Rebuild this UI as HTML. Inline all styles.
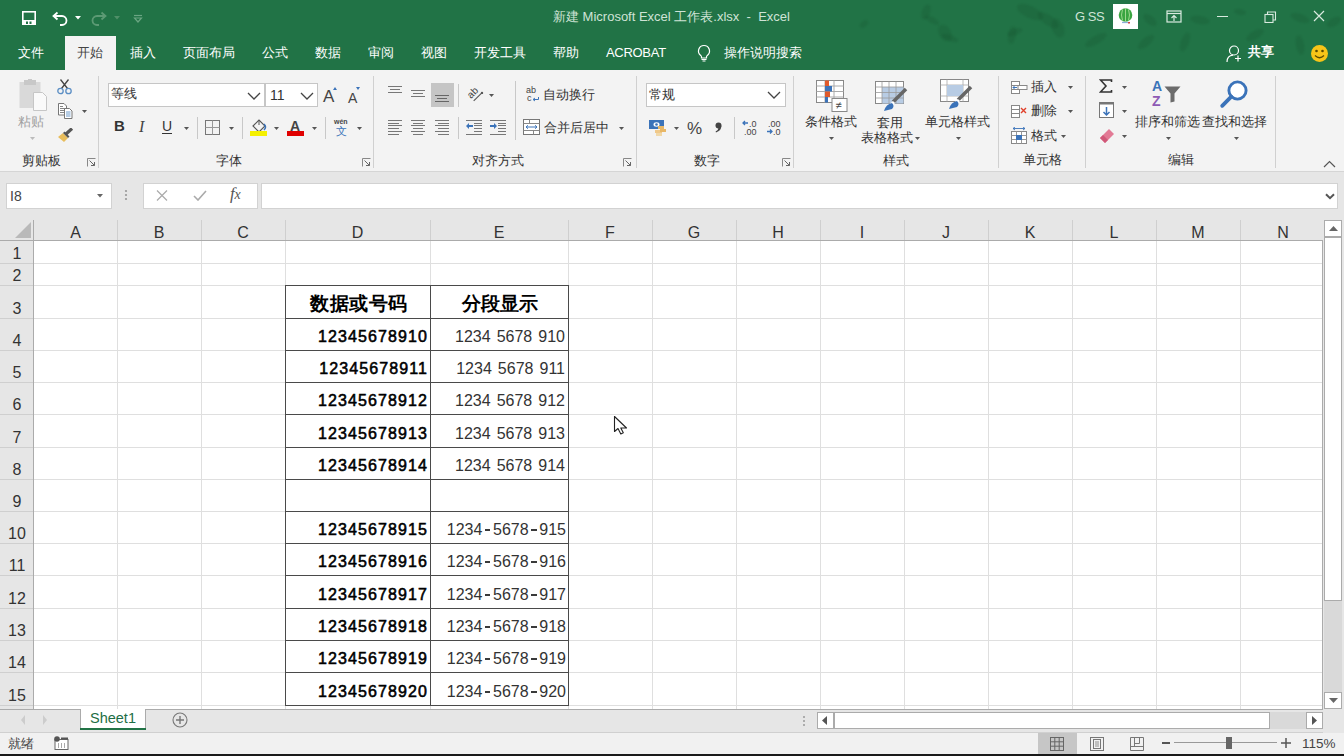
<!DOCTYPE html><html><head><meta charset="utf-8"><style>
*{margin:0;padding:0;box-sizing:border-box}
html,body{width:1344px;height:756px;overflow:hidden;background:#fff;font-family:"Liberation Sans",sans-serif;position:relative}
.a{position:absolute;display:block}
.t{position:absolute;white-space:nowrap;line-height:1}
</style></head><body>
<div class="a" style="left:0px;top:0px;width:1344px;height:70px;background:#217346;"></div>
<svg class="a" style="left:21px;top:10px;" width="16" height="16" viewBox="0 0 16 16"><rect x="1.8" y="1.8" width="12.4" height="12.4" fill="none" stroke="#fff" stroke-width="1.6"/><rect x="1" y="10" width="14" height="5" fill="#fff"/><rect x="5" y="11.5" width="2" height="2.5" fill="#217346"/><rect x="8.5" y="11.5" width="2" height="2.5" fill="#217346"/></svg>
<svg class="a" style="left:51px;top:11px;" width="20" height="16" viewBox="0 0 20 16"><path d="M3 5h8a4.5 4.5 0 0 1 0 9h-2" fill="none" stroke="#fff" stroke-width="1.8"/><path d="M6.5 1.5L2.5 5l4 3.5" fill="none" stroke="#fff" stroke-width="1.8"/></svg>
<svg class="a" style="left:75px;top:16px;" width="6" height="4" viewBox="0 0 6 4"><path d="M0 0h6l-3 3.5z" fill="#fff"/></svg>
<svg class="a" style="left:91px;top:11px;" width="18" height="16" viewBox="0 0 18 16"><path d="M14 5H6a4.5 4.5 0 0 0 0 9h2" fill="none" stroke="#5c9a74" stroke-width="1.8"/><path d="M10.5 1.5L14.5 5l-4 3.5" fill="none" stroke="#5c9a74" stroke-width="1.8"/></svg>
<svg class="a" style="left:114px;top:16px;" width="6" height="4" viewBox="0 0 6 4"><path d="M0 0h6l-3 3.5z" fill="#4f8f68"/></svg>
<svg class="a" style="left:133px;top:14px;" width="10" height="9" viewBox="0 0 10 9"><path d="M1 1.5h8" stroke="#6aa582" stroke-width="1.2"/><path d="M1.5 4h7l-3.5 4z" fill="none" stroke="#6aa582" stroke-width="1.2"/></svg>
<div class="a" style="left:859px;top:21px;width:10px;height:6px;border-radius:50%;background:rgba(10,60,30,0.16);transform:rotate(-40deg);filter:blur(1px)"></div>
<div class="a" style="left:922px;top:4px;width:8px;height:16px;border-radius:50%;background:rgba(10,60,30,0.16);transform:rotate(20deg);filter:blur(1px)"></div>
<div class="a" style="left:924px;top:17px;width:16px;height:6px;border-radius:50%;background:rgba(10,60,30,0.16);transform:rotate(30deg);filter:blur(1px)"></div>
<div class="a" style="left:939px;top:24px;width:12px;height:18px;border-radius:50%;background:rgba(10,60,30,0.16);transform:rotate(-30deg);filter:blur(1px)"></div>
<div class="a" style="left:941px;top:35px;width:18px;height:6px;border-radius:50%;background:rgba(10,60,30,0.16);transform:rotate(20deg);filter:blur(1px)"></div>
<div class="a" style="left:1008px;top:26px;width:8px;height:18px;border-radius:50%;background:rgba(10,60,30,0.16);transform:rotate(10deg);filter:blur(1px)"></div>
<div class="a" style="left:1007px;top:29px;width:16px;height:6px;border-radius:50%;background:rgba(10,60,30,0.16);transform:rotate(-20deg);filter:blur(1px)"></div>
<div class="a" style="left:1016px;top:6px;width:28px;height:12px;border-radius:50%;background:rgba(10,60,30,0.16);transform:rotate(25deg);filter:blur(1px)"></div>
<div class="a" style="left:1036px;top:15px;width:24px;height:10px;border-radius:50%;background:rgba(10,60,30,0.16);transform:rotate(35deg);filter:blur(1px)"></div>
<div class="a" style="left:1052px;top:18px;width:12px;height:20px;border-radius:50%;background:rgba(10,60,30,0.16);transform:rotate(-20deg);filter:blur(1px)"></div>
<div class="a" style="left:1084px;top:36px;width:24px;height:8px;border-radius:50%;background:rgba(10,60,30,0.16);transform:rotate(-30deg);filter:blur(1px)"></div>
<div class="a" style="left:1142px;top:16px;width:16px;height:8px;border-radius:50%;background:rgba(10,60,30,0.16);transform:rotate(40deg);filter:blur(1px)"></div>
<div class="a" style="left:1136px;top:38px;width:20px;height:8px;border-radius:50%;background:rgba(10,60,30,0.16);transform:rotate(-40deg);filter:blur(1px)"></div>
<div class="a" style="left:1181px;top:32px;width:8px;height:20px;border-radius:50%;background:rgba(10,60,30,0.16);transform:rotate(20deg);filter:blur(1px)"></div>
<div class="a" style="left:1190px;top:16px;width:20px;height:8px;border-radius:50%;background:rgba(10,60,30,0.16);transform:rotate(10deg);filter:blur(1px)"></div>
<div class="a" style="left:1245px;top:31px;width:20px;height:8px;border-radius:50%;background:rgba(10,60,30,0.16);transform:rotate(-30deg);filter:blur(1px)"></div>
<div class="a" style="left:1290px;top:14px;width:20px;height:8px;border-radius:50%;background:rgba(10,60,30,0.16);transform:rotate(20deg);filter:blur(1px)"></div>
<div class="a" style="left:1296px;top:35px;width:8px;height:20px;border-radius:50%;background:rgba(10,60,30,0.16);transform:rotate(-10deg);filter:blur(1px)"></div>
<div class="a" style="left:1326px;top:18px;width:16px;height:8px;border-radius:50%;background:rgba(10,60,30,0.16);transform:rotate(-30deg);filter:blur(1px)"></div>
<div class="a" style="left:1234px;top:9px;width:12px;height:6px;border-radius:50%;background:rgba(10,60,30,0.16);transform:rotate(10deg);filter:blur(1px)"></div>
<div class="t" style="left:553px;top:10px;font-size:13px;color:#cfe3d6;font-weight:normal;">新建 Microsoft Excel 工作表.xlsx&nbsp; - &nbsp;Excel</div>
<div class="t" style="left:1075px;top:10px;font-size:13px;color:#cfe3d6;font-weight:normal;letter-spacing:-0.5px">G SS</div>
<div class="a" style="left:1113px;top:4px;width:25px;height:25px;background:#fff;"></div>
<svg class="a" style="left:1117px;top:7px;" width="18" height="19" viewBox="0 0 18 19"><circle cx="8.5" cy="8" r="6.8" fill="#3aa541"/><path d="M5.5 2.5q-2 5.5 0 11M8.5 1.2v13.6M11.5 2.5q2 5.5 0 11" fill="none" stroke="#a8dc98" stroke-width="0.9"/><path d="M5 15.5h8" stroke="#8ab0d8" stroke-width="1.2"/><rect x="11" y="15" width="2" height="1.5" fill="#d04040"/></svg>
<svg class="a" style="left:1166px;top:10px;" width="16" height="13" viewBox="0 0 16 13"><rect x="1" y="1" width="14" height="11" fill="none" stroke="#d9eadf" stroke-width="1.2"/><path d="M1 3.5h14" stroke="#d9eadf" stroke-width="1.2"/><path d="M8 11V6M5.5 8l2.5-2.5L10.5 8" fill="none" stroke="#d9eadf" stroke-width="1.2"/></svg>
<div class="a" style="left:1217px;top:16px;width:11px;height:1px;background:#d9eadf;"></div>
<svg class="a" style="left:1264px;top:11px;" width="13" height="12" viewBox="0 0 13 12"><rect x="1" y="3.5" width="8" height="8" fill="none" stroke="#d9eadf" stroke-width="1.1"/><path d="M3.5 3.5V1h8v8H9" fill="none" stroke="#d9eadf" stroke-width="1.1"/></svg>
<svg class="a" style="left:1313px;top:10px;" width="12" height="12" viewBox="0 0 12 12"><path d="M1 1l10 10M11 1L1 11" stroke="#d9eadf" stroke-width="1.2"/></svg>
<div class="a" style="left:65px;top:36px;width:51px;height:34px;background:#f3f3f3;"></div>
<div class="t" style="left:18px;top:46px;font-size:13px;color:#fff;font-weight:normal;">文件</div>
<div class="t" style="left:77px;top:46px;font-size:13px;color:#444;font-weight:normal;">开始</div>
<div class="t" style="left:130px;top:46px;font-size:13px;color:#fff;font-weight:normal;">插入</div>
<div class="t" style="left:183px;top:46px;font-size:13px;color:#fff;font-weight:normal;">页面布局</div>
<div class="t" style="left:262px;top:46px;font-size:13px;color:#fff;font-weight:normal;">公式</div>
<div class="t" style="left:315px;top:46px;font-size:13px;color:#fff;font-weight:normal;">数据</div>
<div class="t" style="left:368px;top:46px;font-size:13px;color:#fff;font-weight:normal;">审阅</div>
<div class="t" style="left:421px;top:46px;font-size:13px;color:#fff;font-weight:normal;">视图</div>
<div class="t" style="left:474px;top:46px;font-size:13px;color:#fff;font-weight:normal;">开发工具</div>
<div class="t" style="left:553px;top:46px;font-size:13px;color:#fff;font-weight:normal;">帮助</div>
<div class="t" style="left:606px;top:46px;font-size:13px;color:#fff;font-weight:normal;letter-spacing:-0.3px">ACROBAT</div>
<svg class="a" style="left:696px;top:44px;" width="16" height="18" viewBox="0 0 16 18"><path d="M8 1.5a5.5 5.5 0 0 0-3.3 9.9c.5.4.8 1 .8 1.6v1h5v-1c0-.6.3-1.2.8-1.6A5.5 5.5 0 0 0 8 1.5z" fill="none" stroke="#fff" stroke-width="1.2"/><path d="M5.5 15.5h5M6.5 17h3" stroke="#fff" stroke-width="1.2"/></svg>
<div class="t" style="left:724px;top:46px;font-size:13px;color:#fff;font-weight:normal;">操作说明搜索</div>
<svg class="a" style="left:1226px;top:45px;" width="17" height="18" viewBox="0 0 17 18"><circle cx="8" cy="5.5" r="4.5" fill="none" stroke="#fff" stroke-width="1.2"/><path d="M1 17c0-4 2.5-6.5 6-6.8" fill="none" stroke="#fff" stroke-width="1.2"/><path d="M12 10.5v6M9 13.5h6" stroke="#fff" stroke-width="1.2"/></svg>
<div class="t" style="left:1248px;top:45px;font-size:13px;color:#fff;font-weight:bold;">共享</div>
<svg class="a" style="left:1310px;top:44px;" width="19" height="19" viewBox="0 0 19 19"><circle cx="9.5" cy="9.5" r="8.5" fill="#f7c518"/><circle cx="6.5" cy="7" r="1.3" fill="#5a4a00"/><circle cx="12.5" cy="7" r="1.3" fill="#5a4a00"/><path d="M5 11.5q4.5 4.5 9 0" fill="none" stroke="#5a4a00" stroke-width="1.2"/></svg>
<div class="a" style="left:0px;top:70px;width:1344px;height:101px;background:#f3f3f3;"></div>
<div class="a" style="left:0px;top:171px;width:1344px;height:1px;background:#d5d5d5;"></div>
<div class="a" style="left:98px;top:76px;width:1px;height:92px;background:#d0d0d0;"></div>
<div class="a" style="left:373px;top:76px;width:1px;height:92px;background:#d0d0d0;"></div>
<div class="a" style="left:636px;top:76px;width:1px;height:92px;background:#d0d0d0;"></div>
<div class="a" style="left:793px;top:76px;width:1px;height:92px;background:#d0d0d0;"></div>
<div class="a" style="left:998px;top:76px;width:1px;height:92px;background:#d0d0d0;"></div>
<div class="a" style="left:1085px;top:76px;width:1px;height:92px;background:#d0d0d0;"></div>
<div class="a" style="left:1275px;top:76px;width:1px;height:92px;background:#d0d0d0;"></div>
<svg class="a" style="left:18px;top:79px;" width="31" height="33" viewBox="0 0 31 33"><rect x="1.5" y="3" width="21" height="26" fill="#d9d9d9"/><rect x="6" y="1" width="12" height="5" fill="#c8c8c8"/><rect x="10" y="0" width="4" height="3" fill="#c8c8c8"/><path d="M15.5 13.5h9l4 4v14h-13z" fill="#fafafa" stroke="#c6c6c6" stroke-width="1"/></svg>
<div class="t" style="left:18px;top:115px;font-size:13px;color:#a0a0a0;font-weight:normal;">粘贴</div>
<svg class="a" style="left:30px;top:137px;" width="5" height="3" viewBox="0 0 5 3"><path d="M0 0h5l-2.5 3z" fill="#bbb"/></svg>
<svg class="a" style="left:57px;top:79px;" width="15" height="16" viewBox="0 0 15 16"><path d="M3.5 0.5l7 9M11.5 0.5l-7 9" stroke="#444" stroke-width="1.3"/><circle cx="3.5" cy="12" r="2.7" fill="none" stroke="#5b8ec4" stroke-width="1.3"/><circle cx="11.5" cy="12" r="2.7" fill="none" stroke="#5b8ec4" stroke-width="1.3"/></svg>
<svg class="a" style="left:58px;top:103px;" width="15" height="16" viewBox="0 0 15 16"><path d="M0.5 0.5h5.5l2.5 2.5v9h-8z" fill="#fff" stroke="#777" stroke-width="1"/><path d="M2 3.5h3M2 5.5h5M2 7.5h5M2 9.5h5" stroke="#777" stroke-width="0.9"/><path d="M6.5 5.5h5l2.5 2.5v7.5h-7.5z" fill="#fff" stroke="#777" stroke-width="1"/><path d="M8 9h4.5M8 11h4.5M8 13h4.5" stroke="#5b8ec4" stroke-width="0.9"/></svg>
<svg class="a" style="left:82px;top:110px;" width="5" height="3" viewBox="0 0 5 3"><path d="M0 0h5l-2.5 3z" fill="#555"/></svg>
<svg class="a" style="left:57px;top:128px;" width="17" height="15" viewBox="0 0 17 15"><path d="M9 6l6-5.5" stroke="#555" stroke-width="3.2"/><path d="M1 9l5-4 5 5-4 4z" fill="#e8bd5c"/><path d="M6 5l1.5-1.5 5 5L11 10z" fill="#555"/></svg>
<div class="t" style="left:22px;top:154px;font-size:13px;color:#333;font-weight:normal;">剪贴板</div>
<svg class="a" style="left:87px;top:158px;" width="9" height="9" viewBox="0 0 9 9"><path d="M0.5 8.5V0.5h8" fill="none" stroke="#888" stroke-width="1"/><path d="M2.5 2.5l5 5M4 7.5h3.5V4" fill="none" stroke="#666" stroke-width="1"/></svg>
<div class="a" style="left:108px;top:83px;width:157px;height:24px;background:#fff;border:1px solid #c6c6c6"></div>
<div class="t" style="left:111px;top:87px;font-size:13px;color:#333;font-weight:normal;">等线</div>
<svg class="a" style="left:247px;top:92px;" width="14" height="8" viewBox="0 0 14 8"><path d="M1 1l6.0 6l6.0 -6" fill="none" stroke="#444" stroke-width="1.3"/></svg>
<div class="a" style="left:265px;top:83px;width:53px;height:24px;background:#fff;border:1px solid #c6c6c6"></div>
<div class="t" style="left:270px;top:88px;font-size:14px;color:#333;font-weight:normal;">11</div>
<svg class="a" style="left:300px;top:92px;" width="14" height="8" viewBox="0 0 14 8"><path d="M1 1l6.0 6l6.0 -6" fill="none" stroke="#444" stroke-width="1.3"/></svg>
<div class="t" style="left:323px;top:88px;font-size:17px;color:#444;font-weight:normal;font-weight:normal">A</div>
<svg class="a" style="left:333px;top:87px;" width="4" height="3" viewBox="0 0 4 3"><path d="M0 3h4L2 0z" fill="#3b73b9"/></svg>
<div class="t" style="left:348px;top:91px;font-size:14px;color:#444;font-weight:normal;">A</div>
<svg class="a" style="left:356px;top:87px;" width="4" height="3" viewBox="0 0 4 3"><path d="M0 0h4L2 3z" fill="#3b73b9"/></svg>
<div class="t" style="left:114px;top:118px;font-size:15px;color:#333;font-weight:bold;">B</div>
<div class="t" style="left:139px;top:119px;font-size:16px;color:#444;font-weight:normal;font-style:italic;font-family:Liberation Serif,serif">I</div>
<div class="t" style="left:162px;top:119px;font-size:14px;color:#333;font-weight:normal;">U</div>
<div class="a" style="left:162px;top:133px;width:10px;height:1px;background:#333;"></div>
<svg class="a" style="left:184px;top:127px;" width="5" height="3" viewBox="0 0 5 3"><path d="M0 0h5l-2.5 3z" fill="#555"/></svg>
<div class="a" style="left:197px;top:117px;width:1px;height:22px;background:#c8c8c8;"></div>
<svg class="a" style="left:205px;top:120px;" width="15" height="15" viewBox="0 0 15 15"><rect x="0.5" y="0.5" width="14" height="14" fill="none" stroke="#777" stroke-width="1"/><path d="M7.5 0.5v14M0.5 7.5h14" stroke="#999" stroke-width="1"/></svg>
<svg class="a" style="left:229px;top:127px;" width="5" height="3" viewBox="0 0 5 3"><path d="M0 0h5l-2.5 3z" fill="#555"/></svg>
<div class="a" style="left:242px;top:117px;width:1px;height:22px;background:#c8c8c8;"></div>
<svg class="a" style="left:251px;top:119px;" width="16" height="13" viewBox="0 0 16 13"><path d="M2 7l6-6 6 6-6 6z" fill="none" stroke="#555" stroke-width="1.1"/><path d="M8 1v5" stroke="#555" stroke-width="1"/><path d="M13 5q3 3 0 6" fill="none" stroke="#3b73b9" stroke-width="1.5"/></svg>
<div class="a" style="left:250px;top:131px;width:17px;height:5px;background:#f5f000;"></div>
<svg class="a" style="left:274px;top:127px;" width="5" height="3" viewBox="0 0 5 3"><path d="M0 0h5l-2.5 3z" fill="#555"/></svg>
<div class="t" style="left:290px;top:119px;font-size:14px;color:#444;font-weight:bold;">A</div>
<div class="a" style="left:287px;top:131px;width:17px;height:5px;background:#e00000;"></div>
<svg class="a" style="left:312px;top:127px;" width="5" height="3" viewBox="0 0 5 3"><path d="M0 0h5l-2.5 3z" fill="#555"/></svg>
<div class="a" style="left:325px;top:117px;width:1px;height:22px;background:#c8c8c8;"></div>
<div class="t" style="left:334px;top:118px;font-size:7px;color:#444;font-weight:normal;font-weight:bold">wén</div>
<div class="t" style="left:336px;top:126px;font-size:11px;color:#3b73b9;font-weight:normal;">文</div>
<svg class="a" style="left:357px;top:127px;" width="5" height="3" viewBox="0 0 5 3"><path d="M0 0h5l-2.5 3z" fill="#555"/></svg>
<div class="t" style="left:216px;top:154px;font-size:13px;color:#333;font-weight:normal;">字体</div>
<svg class="a" style="left:362px;top:158px;" width="9" height="9" viewBox="0 0 9 9"><path d="M0.5 8.5V0.5h8" fill="none" stroke="#888" stroke-width="1"/><path d="M2.5 2.5l5 5M4 7.5h3.5V4" fill="none" stroke="#666" stroke-width="1"/></svg>
<div class="a" style="left:388px;top:86px;width:14px;height:1px;background:#777;"></div>
<div class="a" style="left:390px;top:89px;width:10px;height:1px;background:#777;"></div>
<div class="a" style="left:388px;top:92px;width:14px;height:1px;background:#777;"></div>
<div class="a" style="left:411px;top:90px;width:14px;height:1px;background:#777;"></div>
<div class="a" style="left:413px;top:93px;width:10px;height:1px;background:#777;"></div>
<div class="a" style="left:411px;top:96px;width:14px;height:1px;background:#777;"></div>
<div class="a" style="left:431px;top:83px;width:23px;height:24px;background:#c5c5c5;"></div>
<div class="a" style="left:435px;top:95px;width:14px;height:1px;background:#666;"></div>
<div class="a" style="left:437px;top:98px;width:10px;height:1px;background:#666;"></div>
<div class="a" style="left:435px;top:101px;width:14px;height:1px;background:#666;"></div>
<div class="a" style="left:458px;top:84px;width:1px;height:23px;background:#c8c8c8;"></div>
<svg class="a" style="left:466px;top:86px;" width="18" height="17" viewBox="0 0 18 17"><text x="5" y="13" font-size="10" font-family="Liberation Sans" fill="#444" transform="rotate(-45 5 13)">ab</text><path d="M7.7 14.8L15.6 7.2" stroke="#555" stroke-width="1.1"/><circle cx="16" cy="6.9" r="1.2" fill="#555"/></svg>
<svg class="a" style="left:489px;top:94px;" width="5" height="3" viewBox="0 0 5 3"><path d="M0 0h5l-2.5 3z" fill="#555"/></svg>
<div class="a" style="left:388px;top:120px;width:14px;height:1px;background:#777;"></div>
<div class="a" style="left:388px;top:123px;width:11px;height:1px;background:#777;"></div>
<div class="a" style="left:388px;top:125px;width:14px;height:1px;background:#777;"></div>
<div class="a" style="left:388px;top:128px;width:11px;height:1px;background:#777;"></div>
<div class="a" style="left:388px;top:131px;width:14px;height:1px;background:#777;"></div>
<div class="a" style="left:388px;top:134px;width:11px;height:1px;background:#777;"></div>
<div class="a" style="left:411px;top:120px;width:14px;height:1px;background:#777;"></div>
<div class="a" style="left:413px;top:123px;width:10px;height:1px;background:#777;"></div>
<div class="a" style="left:411px;top:125px;width:14px;height:1px;background:#777;"></div>
<div class="a" style="left:413px;top:128px;width:10px;height:1px;background:#777;"></div>
<div class="a" style="left:411px;top:131px;width:14px;height:1px;background:#777;"></div>
<div class="a" style="left:413px;top:134px;width:10px;height:1px;background:#777;"></div>
<div class="a" style="left:435px;top:120px;width:14px;height:1px;background:#777;"></div>
<div class="a" style="left:438px;top:123px;width:11px;height:1px;background:#777;"></div>
<div class="a" style="left:435px;top:125px;width:14px;height:1px;background:#777;"></div>
<div class="a" style="left:438px;top:128px;width:11px;height:1px;background:#777;"></div>
<div class="a" style="left:435px;top:131px;width:14px;height:1px;background:#777;"></div>
<div class="a" style="left:438px;top:134px;width:11px;height:1px;background:#777;"></div>
<div class="a" style="left:458px;top:117px;width:1px;height:22px;background:#c8c8c8;"></div>
<div class="a" style="left:466px;top:120px;width:16px;height:1px;background:#777;"></div>
<div class="a" style="left:474px;top:123px;width:8px;height:1px;background:#777;"></div>
<div class="a" style="left:474px;top:125px;width:8px;height:1px;background:#777;"></div>
<div class="a" style="left:474px;top:128px;width:8px;height:1px;background:#777;"></div>
<div class="a" style="left:474px;top:131px;width:8px;height:1px;background:#777;"></div>
<div class="a" style="left:466px;top:134px;width:16px;height:1px;background:#777;"></div>
<svg class="a" style="left:466px;top:123px;" width="7" height="6" viewBox="0 0 7 6"><path d="M0 3l3-3v2h4v2H3v2z" fill="#3b73b9"/></svg>
<div class="a" style="left:490px;top:120px;width:16px;height:1px;background:#777;"></div>
<div class="a" style="left:498px;top:123px;width:8px;height:1px;background:#777;"></div>
<div class="a" style="left:498px;top:125px;width:8px;height:1px;background:#777;"></div>
<div class="a" style="left:498px;top:128px;width:8px;height:1px;background:#777;"></div>
<div class="a" style="left:498px;top:131px;width:8px;height:1px;background:#777;"></div>
<div class="a" style="left:490px;top:134px;width:16px;height:1px;background:#777;"></div>
<svg class="a" style="left:490px;top:123px;" width="7" height="6" viewBox="0 0 7 6"><path d="M7 3L4 0v2H0v2h4v2z" fill="#3b73b9"/></svg>
<div class="a" style="left:515px;top:81px;width:1px;height:59px;background:#c8c8c8;"></div>
<div class="t" style="left:526px;top:86px;font-size:9px;color:#444;font-weight:normal;letter-spacing:0px">ab</div>
<div class="t" style="left:527px;top:94px;font-size:9px;color:#444;font-weight:normal;">c</div>
<svg class="a" style="left:532px;top:97px;" width="7" height="5" viewBox="0 0 7 5"><path d="M6.5 0v2.5H1.5M3 1l-2 1.5 2 1.5" fill="none" stroke="#3b73b9" stroke-width="1"/></svg>
<div class="t" style="left:543px;top:88px;font-size:13px;color:#333;font-weight:normal;">自动换行</div>
<svg class="a" style="left:523px;top:119px;" width="17" height="16" viewBox="0 0 17 16"><rect x="0.5" y="0.5" width="16" height="15" fill="#fff" stroke="#777" stroke-width="1"/><path d="M0.5 4.5h16M0.5 11.5h16M6.5 0.5v4M10.5 11.5v4" stroke="#888" stroke-width="1"/><path d="M3 8h11M5 6.3L3 8l2 1.7M12 6.3L14 8l-2 1.7" fill="none" stroke="#3b73b9" stroke-width="1"/></svg>
<div class="t" style="left:544px;top:121px;font-size:13px;color:#333;font-weight:normal;">合并后居中</div>
<svg class="a" style="left:619px;top:127px;" width="5" height="3" viewBox="0 0 5 3"><path d="M0 0h5l-2.5 3z" fill="#555"/></svg>
<div class="t" style="left:472px;top:154px;font-size:13px;color:#333;font-weight:normal;">对齐方式</div>
<svg class="a" style="left:623px;top:158px;" width="9" height="9" viewBox="0 0 9 9"><path d="M0.5 8.5V0.5h8" fill="none" stroke="#888" stroke-width="1"/><path d="M2.5 2.5l5 5M4 7.5h3.5V4" fill="none" stroke="#666" stroke-width="1"/></svg>
<div class="a" style="left:646px;top:83px;width:140px;height:24px;background:#fff;border:1px solid #c6c6c6"></div>
<div class="t" style="left:649px;top:88px;font-size:13px;color:#333;font-weight:normal;">常规</div>
<svg class="a" style="left:767px;top:91px;" width="14" height="8" viewBox="0 0 14 8"><path d="M1 1l6.0 6l6.0 -6" fill="none" stroke="#444" stroke-width="1.3"/></svg>
<svg class="a" style="left:649px;top:120px;" width="17" height="16" viewBox="0 0 17 16"><rect x="0" y="0" width="15" height="9" fill="#3b73b9"/><ellipse cx="7.5" cy="4.5" rx="3" ry="2.2" fill="#fff"/><circle cx="7.5" cy="4.5" r="1.3" fill="#3b73b9"/><rect x="9" y="6" width="6" height="3" fill="#e8b766"/><rect x="6" y="10" width="7" height="3" fill="#f0c98a"/><rect x="11" y="9" width="6" height="3" fill="#e8b766"/><rect x="7" y="13" width="6" height="3" fill="#f0d8aa"/></svg>
<svg class="a" style="left:674px;top:127px;" width="5" height="3" viewBox="0 0 5 3"><path d="M0 0h5l-2.5 3z" fill="#555"/></svg>
<div class="t" style="left:687px;top:120px;font-size:17px;color:#444;font-weight:normal;">%</div>
<svg class="a" style="left:714px;top:122px;" width="8" height="11" viewBox="0 0 8 11"><circle cx="4.5" cy="3.5" r="3" fill="#444"/><path d="M7.3 4Q7.5 8.5 2 10.5L1.6 9.6Q4.5 8 4.6 5.5z" fill="#444"/></svg>
<div class="a" style="left:734px;top:117px;width:1px;height:22px;background:#c8c8c8;"></div>
<svg class="a" style="left:742px;top:120px;" width="17" height="15" viewBox="0 0 17 15"><path d="M6 3H1M3 1L1 3l2 2" fill="none" stroke="#3b73b9" stroke-width="1.3"/><text x="7" y="7" font-size="9" font-family="Liberation Sans" fill="#444">.0</text><text x="2" y="14.5" font-size="9" font-family="Liberation Sans" fill="#444">.00</text></svg>
<svg class="a" style="left:766px;top:120px;" width="17" height="15" viewBox="0 0 17 15"><text x="2" y="7" font-size="9" font-family="Liberation Sans" fill="#444">.00</text><path d="M1 11.5h5M4 9.5l2 2-2 2" fill="none" stroke="#3b73b9" stroke-width="1.3"/><text x="7" y="14.5" font-size="9" font-family="Liberation Sans" fill="#444">.0</text></svg>
<div class="t" style="left:694px;top:154px;font-size:13px;color:#333;font-weight:normal;">数字</div>
<svg class="a" style="left:782px;top:158px;" width="9" height="9" viewBox="0 0 9 9"><path d="M0.5 8.5V0.5h8" fill="none" stroke="#888" stroke-width="1"/><path d="M2.5 2.5l5 5M4 7.5h3.5V4" fill="none" stroke="#666" stroke-width="1"/></svg>
<svg class="a" style="left:815px;top:79px;" width="33" height="33" viewBox="0 0 33 33"><rect x="1.5" y="1.5" width="27" height="22" fill="#fff" stroke="#888" stroke-width="1"/><path d="M1.5 7h27M1.5 12.5h27M1.5 18h27M10 1.5v22M19 1.5v22" stroke="#aaa" stroke-width="1"/><rect x="10" y="1.5" width="4" height="5.5" fill="#e05a2b"/><rect x="10" y="7" width="7" height="5.5" fill="#3b73b9"/><rect x="10" y="12.5" width="5" height="5.5" fill="#e05a2b"/><rect x="10" y="18" width="3" height="5.5" fill="#3b73b9"/><rect x="17" y="19.5" width="15" height="13" fill="#fff" stroke="#888" stroke-width="1"/><text x="20.5" y="30" font-size="11" font-family="Liberation Sans" fill="#444">≠</text></svg>
<div class="t" style="left:805px;top:115px;font-size:13px;color:#333;font-weight:normal;">条件格式</div>
<svg class="a" style="left:829px;top:137px;" width="5" height="3" viewBox="0 0 5 3"><path d="M0 0h5l-2.5 3z" fill="#555"/></svg>
<svg class="a" style="left:875px;top:81px;" width="34" height="31" viewBox="0 0 34 31"><rect x="0.5" y="0.5" width="28" height="22" fill="#fff" stroke="#888" stroke-width="1"/><rect x="7" y="6" width="21.5" height="16.5" fill="#b8cce4"/><path d="M0.5 6h28M0.5 11.5h28M0.5 17h28M7 0.5v22M14 0.5v22M21 0.5v22" stroke="#999" stroke-width="0.8"/><path d="M18 21l13-13" stroke="#666" stroke-width="3.5"/><path d="M19 21l-3 3" stroke="#fff" stroke-width="3"/><path d="M9 30q2-7 8-8 3 3 0 6z" fill="#3b73b9"/></svg>
<div class="t" style="left:877px;top:116px;font-size:13px;color:#333;font-weight:normal;">套用</div>
<div class="t" style="left:861px;top:131px;font-size:13px;color:#333;font-weight:normal;">表格格式</div>
<svg class="a" style="left:915px;top:137px;" width="5" height="3" viewBox="0 0 5 3"><path d="M0 0h5l-2.5 3z" fill="#555"/></svg>
<svg class="a" style="left:940px;top:79px;" width="34" height="31" viewBox="0 0 34 31"><rect x="0.5" y="0.5" width="28" height="22" fill="#fff" stroke="#888" stroke-width="1"/><path d="M0.5 6h28M0.5 17h28M7 0.5v22M23 0.5v22" stroke="#aaa" stroke-width="0.8"/><rect x="7" y="6" width="16" height="11" fill="#b8cce4"/><path d="M18 21l13-13" stroke="#666" stroke-width="3.5"/><path d="M19 21l-3 3" stroke="#fff" stroke-width="3"/><path d="M9 30q2-7 8-8 3 3 0 6z" fill="#3b73b9"/></svg>
<div class="t" style="left:925px;top:115px;font-size:13px;color:#333;font-weight:normal;">单元格样式</div>
<svg class="a" style="left:956px;top:137px;" width="5" height="3" viewBox="0 0 5 3"><path d="M0 0h5l-2.5 3z" fill="#555"/></svg>
<div class="t" style="left:883px;top:154px;font-size:13px;color:#333;font-weight:normal;">样式</div>
<svg class="a" style="left:1011px;top:79px;" width="17" height="16" viewBox="0 0 17 16"><rect x="0.5" y="2.5" width="8" height="12" fill="#fff" stroke="#888" stroke-width="1"/><path d="M0.5 6.5h8M0.5 10.5h8" stroke="#888" stroke-width="1"/><rect x="7" y="6.5" width="9" height="4" fill="#fff" stroke="#888" stroke-width="1"/><path d="M6 8.5H2M3.5 7L2 8.5 3.5 10" fill="none" stroke="#3b73b9" stroke-width="1"/></svg>
<div class="t" style="left:1031px;top:80px;font-size:13px;color:#333;font-weight:normal;">插入</div>
<svg class="a" style="left:1068px;top:86px;" width="5" height="3" viewBox="0 0 5 3"><path d="M0 0h5l-2.5 3z" fill="#555"/></svg>
<svg class="a" style="left:1011px;top:103px;" width="17" height="16" viewBox="0 0 17 16"><rect x="0.5" y="2.5" width="8" height="12" fill="#fff" stroke="#888" stroke-width="1"/><path d="M0.5 6.5h8M0.5 10.5h8" stroke="#888" stroke-width="1"/><path d="M10 5l5 5M15 5l-5 5" stroke="#e0402a" stroke-width="1.4"/></svg>
<div class="t" style="left:1031px;top:104px;font-size:13px;color:#333;font-weight:normal;">删除</div>
<svg class="a" style="left:1068px;top:110px;" width="5" height="3" viewBox="0 0 5 3"><path d="M0 0h5l-2.5 3z" fill="#555"/></svg>
<svg class="a" style="left:1011px;top:127px;" width="17" height="17" viewBox="0 0 17 17"><rect x="0.5" y="4.5" width="15" height="12" fill="#fff" stroke="#888" stroke-width="1"/><path d="M0.5 8.5h15M0.5 12.5h15M5.5 4.5v12M10.5 4.5v12" stroke="#999" stroke-width="1"/><rect x="5" y="8" width="6" height="5" fill="#3b73b9"/><path d="M2 1.5h12M4 0l-2 1.5 2 1.5M12 0l2 1.5-2 1.5" fill="none" stroke="#3b73b9" stroke-width="0.9"/></svg>
<div class="t" style="left:1031px;top:129px;font-size:13px;color:#333;font-weight:normal;">格式</div>
<svg class="a" style="left:1061px;top:135px;" width="5" height="3" viewBox="0 0 5 3"><path d="M0 0h5l-2.5 3z" fill="#555"/></svg>
<div class="t" style="left:1023px;top:153px;font-size:13px;color:#333;font-weight:normal;">单元格</div>
<svg class="a" style="left:1099px;top:79px;" width="14" height="14" viewBox="0 0 14 14"><path d="M12.5 3V1H1.5l5.5 6-5.5 6h11v-2" fill="none" stroke="#333" stroke-width="1.6"/></svg>
<svg class="a" style="left:1122px;top:86px;" width="5" height="3" viewBox="0 0 5 3"><path d="M0 0h5l-2.5 3z" fill="#555"/></svg>
<svg class="a" style="left:1099px;top:102px;" width="16" height="17" viewBox="0 0 16 17"><rect x="0.5" y="0.5" width="14" height="15" fill="#fff" stroke="#777" stroke-width="1"/><rect x="0.5" y="0.5" width="14" height="2" fill="#777"/><path d="M7.5 5v8M4.5 10l3 3 3-3" fill="none" stroke="#3b73b9" stroke-width="1.5"/></svg>
<svg class="a" style="left:1122px;top:110px;" width="5" height="3" viewBox="0 0 5 3"><path d="M0 0h5l-2.5 3z" fill="#555"/></svg>
<svg class="a" style="left:1099px;top:128px;" width="16" height="15" viewBox="0 0 16 15"><path d="M1 10l9-9 5 5-9 9z" fill="#e27a95"/><path d="M1 10l3-3 5 5-3 3z" fill="#d05878"/></svg>
<svg class="a" style="left:1122px;top:135px;" width="5" height="3" viewBox="0 0 5 3"><path d="M0 0h5l-2.5 3z" fill="#555"/></svg>
<div class="t" style="left:1152px;top:79px;font-size:14px;color:#3b73b9;font-weight:bold;">A</div>
<div class="t" style="left:1152px;top:94px;font-size:14px;color:#8e5bb5;font-weight:bold;">Z</div>
<svg class="a" style="left:1164px;top:86px;" width="18" height="17" viewBox="0 0 18 17"><path d="M0.5 0.5h16l-6 7v8l-4 1v-9z" fill="#6b6b6b"/></svg>
<div class="t" style="left:1135px;top:115px;font-size:13px;color:#333;font-weight:normal;">排序和筛选</div>
<svg class="a" style="left:1166px;top:137px;" width="5" height="3" viewBox="0 0 5 3"><path d="M0 0h5l-2.5 3z" fill="#555"/></svg>
<svg class="a" style="left:1219px;top:80px;" width="30" height="30" viewBox="0 0 30 30"><circle cx="18.5" cy="10.5" r="8.6" fill="#fff" stroke="#3b73b9" stroke-width="2.9"/><path d="M12.3 16.7L3.2 25.8" stroke="#3b73b9" stroke-width="3.8" stroke-linecap="round"/></svg>
<div class="t" style="left:1202px;top:115px;font-size:13px;color:#333;font-weight:normal;">查找和选择</div>
<svg class="a" style="left:1234px;top:137px;" width="5" height="3" viewBox="0 0 5 3"><path d="M0 0h5l-2.5 3z" fill="#555"/></svg>
<div class="t" style="left:1168px;top:153px;font-size:13px;color:#333;font-weight:normal;">编辑</div>
<svg class="a" style="left:1323px;top:160px;" width="13" height="8" viewBox="0 0 13 8"><path d="M1 7l5.5-5.5L12 7" fill="none" stroke="#555" stroke-width="1.2"/></svg>
<div class="a" style="left:0px;top:172px;width:1344px;height:44px;background:#e6e6e6;"></div>
<div class="a" style="left:6px;top:183px;width:106px;height:26px;background:#fff;border:1px solid #d2d2d2"></div>
<div class="t" style="left:10px;top:189px;font-size:14px;color:#444;font-weight:normal;">I8</div>
<svg class="a" style="left:97px;top:194px;" width="6" height="4" viewBox="0 0 6 4"><path d="M0 0h6l-3 3.5z" fill="#666"/></svg>
<svg class="a" style="left:124px;top:189px;" width="4" height="12" viewBox="0 0 4 12"><circle cx="2" cy="2" r="1.1" fill="#999"/><circle cx="2" cy="6" r="1.1" fill="#999"/><circle cx="2" cy="10" r="1.1" fill="#999"/></svg>
<div class="a" style="left:143px;top:183px;width:115px;height:26px;background:#fff;border:1px solid #d2d2d2"></div>
<svg class="a" style="left:156px;top:190px;" width="12" height="11" viewBox="0 0 12 11"><path d="M1 0.5l10 10M11 0.5l-10 10" stroke="#aaa" stroke-width="1.2"/></svg>
<svg class="a" style="left:193px;top:190px;" width="14" height="11" viewBox="0 0 14 11"><path d="M1 6l4 4 8-9" fill="none" stroke="#aaa" stroke-width="1.6"/></svg>
<div class="t" style="left:230px;top:185px;font-size:17px;color:#555;font-weight:normal;font-family:Liberation Serif,serif;font-weight:normal;letter-spacing:-0.3px"><i>f</i><i style="font-size:14px">x</i></div>
<div class="a" style="left:261px;top:183px;width:1077px;height:26px;background:#fff;border:1px solid #d2d2d2"></div>
<svg class="a" style="left:1325px;top:193px;" width="10" height="7" viewBox="0 0 10 7"><path d="M1 1.2l4 4 4-4" fill="none" stroke="#555" stroke-width="2"/></svg>
<div class="a" style="left:0px;top:216px;width:1323px;height:25px;background:#e6e6e6;"></div>
<div class="a" style="left:34px;top:241px;width:1289px;height:468px;background:#ffffff;"></div>
<div class="a" style="left:0px;top:241px;width:34px;height:468px;background:#e6e6e6;"></div>
<div class="a" style="left:0px;top:240px;width:1323px;height:1px;background:#ababab;"></div>
<div class="a" style="left:33px;top:220px;width:1px;height:489px;background:#ababab;"></div>
<svg class="a" style="left:15px;top:222px;" width="17" height="17" viewBox="0 0 17 17"><path d="M16 0v16H0z" fill="#b9b9b9"/></svg>
<div class="a" style="left:117px;top:241px;width:1px;height:468px;background:#dfdfdf;"></div>
<div class="a" style="left:117px;top:220px;width:1px;height:20px;background:#cfcfcf;"></div>
<div class="t" style="left:-124.5px;width:400px;text-align:center;top:225px;font-size:16px;color:#333;font-weight:normal;">A</div>
<div class="a" style="left:201px;top:241px;width:1px;height:468px;background:#dfdfdf;"></div>
<div class="a" style="left:201px;top:220px;width:1px;height:20px;background:#cfcfcf;"></div>
<div class="t" style="left:-41.0px;width:400px;text-align:center;top:225px;font-size:16px;color:#333;font-weight:normal;">B</div>
<div class="a" style="left:285px;top:241px;width:1px;height:468px;background:#dfdfdf;"></div>
<div class="a" style="left:285px;top:220px;width:1px;height:20px;background:#cfcfcf;"></div>
<div class="t" style="left:43.0px;width:400px;text-align:center;top:225px;font-size:16px;color:#333;font-weight:normal;">C</div>
<div class="a" style="left:430px;top:241px;width:1px;height:468px;background:#dfdfdf;"></div>
<div class="a" style="left:430px;top:220px;width:1px;height:20px;background:#cfcfcf;"></div>
<div class="t" style="left:157.5px;width:400px;text-align:center;top:225px;font-size:16px;color:#333;font-weight:normal;">D</div>
<div class="a" style="left:568px;top:241px;width:1px;height:468px;background:#dfdfdf;"></div>
<div class="a" style="left:568px;top:220px;width:1px;height:20px;background:#cfcfcf;"></div>
<div class="t" style="left:299.0px;width:400px;text-align:center;top:225px;font-size:16px;color:#333;font-weight:normal;">E</div>
<div class="a" style="left:652px;top:241px;width:1px;height:468px;background:#dfdfdf;"></div>
<div class="a" style="left:652px;top:220px;width:1px;height:20px;background:#cfcfcf;"></div>
<div class="t" style="left:410.0px;width:400px;text-align:center;top:225px;font-size:16px;color:#333;font-weight:normal;">F</div>
<div class="a" style="left:736px;top:241px;width:1px;height:468px;background:#dfdfdf;"></div>
<div class="a" style="left:736px;top:220px;width:1px;height:20px;background:#cfcfcf;"></div>
<div class="t" style="left:494.0px;width:400px;text-align:center;top:225px;font-size:16px;color:#333;font-weight:normal;">G</div>
<div class="a" style="left:820px;top:241px;width:1px;height:468px;background:#dfdfdf;"></div>
<div class="a" style="left:820px;top:220px;width:1px;height:20px;background:#cfcfcf;"></div>
<div class="t" style="left:578.0px;width:400px;text-align:center;top:225px;font-size:16px;color:#333;font-weight:normal;">H</div>
<div class="a" style="left:904px;top:241px;width:1px;height:468px;background:#dfdfdf;"></div>
<div class="a" style="left:904px;top:220px;width:1px;height:20px;background:#cfcfcf;"></div>
<div class="t" style="left:662.0px;width:400px;text-align:center;top:225px;font-size:16px;color:#333;font-weight:normal;">I</div>
<div class="a" style="left:988px;top:241px;width:1px;height:468px;background:#dfdfdf;"></div>
<div class="a" style="left:988px;top:220px;width:1px;height:20px;background:#cfcfcf;"></div>
<div class="t" style="left:746.0px;width:400px;text-align:center;top:225px;font-size:16px;color:#333;font-weight:normal;">J</div>
<div class="a" style="left:1072px;top:241px;width:1px;height:468px;background:#dfdfdf;"></div>
<div class="a" style="left:1072px;top:220px;width:1px;height:20px;background:#cfcfcf;"></div>
<div class="t" style="left:830.0px;width:400px;text-align:center;top:225px;font-size:16px;color:#333;font-weight:normal;">K</div>
<div class="a" style="left:1156px;top:241px;width:1px;height:468px;background:#dfdfdf;"></div>
<div class="a" style="left:1156px;top:220px;width:1px;height:20px;background:#cfcfcf;"></div>
<div class="t" style="left:914.0px;width:400px;text-align:center;top:225px;font-size:16px;color:#333;font-weight:normal;">L</div>
<div class="a" style="left:1240px;top:241px;width:1px;height:468px;background:#dfdfdf;"></div>
<div class="a" style="left:1240px;top:220px;width:1px;height:20px;background:#cfcfcf;"></div>
<div class="t" style="left:998.0px;width:400px;text-align:center;top:225px;font-size:16px;color:#333;font-weight:normal;">M</div>
<div class="a" style="left:1322px;top:241px;width:1px;height:468px;background:#dfdfdf;"></div>
<div class="t" style="left:1083px;width:400px;text-align:center;top:225px;font-size:16px;color:#333;font-weight:normal;">N</div>
<div class="a" style="left:34px;top:263px;width:1289px;height:1px;background:#dfdfdf;"></div>
<div class="a" style="left:0px;top:263px;width:33px;height:1px;background:#cfcfcf;"></div>
<div class="t" style="left:-183px;width:400px;text-align:center;top:246px;font-size:16px;color:#333;font-weight:normal;">1</div>
<div class="a" style="left:34px;top:285px;width:1289px;height:1px;background:#dfdfdf;"></div>
<div class="a" style="left:0px;top:285px;width:33px;height:1px;background:#cfcfcf;"></div>
<div class="t" style="left:-183px;width:400px;text-align:center;top:268px;font-size:16px;color:#333;font-weight:normal;">2</div>
<div class="a" style="left:34px;top:318px;width:1289px;height:1px;background:#dfdfdf;"></div>
<div class="a" style="left:0px;top:318px;width:33px;height:1px;background:#cfcfcf;"></div>
<div class="t" style="left:-183px;width:400px;text-align:center;top:301px;font-size:16px;color:#333;font-weight:normal;">3</div>
<div class="a" style="left:34px;top:350px;width:1289px;height:1px;background:#dfdfdf;"></div>
<div class="a" style="left:0px;top:350px;width:33px;height:1px;background:#cfcfcf;"></div>
<div class="t" style="left:-183px;width:400px;text-align:center;top:333px;font-size:16px;color:#333;font-weight:normal;">4</div>
<div class="a" style="left:34px;top:382px;width:1289px;height:1px;background:#dfdfdf;"></div>
<div class="a" style="left:0px;top:382px;width:33px;height:1px;background:#cfcfcf;"></div>
<div class="t" style="left:-183px;width:400px;text-align:center;top:365px;font-size:16px;color:#333;font-weight:normal;">5</div>
<div class="a" style="left:34px;top:414px;width:1289px;height:1px;background:#dfdfdf;"></div>
<div class="a" style="left:0px;top:414px;width:33px;height:1px;background:#cfcfcf;"></div>
<div class="t" style="left:-183px;width:400px;text-align:center;top:397px;font-size:16px;color:#333;font-weight:normal;">6</div>
<div class="a" style="left:34px;top:447px;width:1289px;height:1px;background:#dfdfdf;"></div>
<div class="a" style="left:0px;top:447px;width:33px;height:1px;background:#cfcfcf;"></div>
<div class="t" style="left:-183px;width:400px;text-align:center;top:430px;font-size:16px;color:#333;font-weight:normal;">7</div>
<div class="a" style="left:34px;top:479px;width:1289px;height:1px;background:#dfdfdf;"></div>
<div class="a" style="left:0px;top:479px;width:33px;height:1px;background:#cfcfcf;"></div>
<div class="t" style="left:-183px;width:400px;text-align:center;top:462px;font-size:16px;color:#333;font-weight:normal;">8</div>
<div class="a" style="left:34px;top:511px;width:1289px;height:1px;background:#dfdfdf;"></div>
<div class="a" style="left:0px;top:511px;width:33px;height:1px;background:#cfcfcf;"></div>
<div class="t" style="left:-183px;width:400px;text-align:center;top:494px;font-size:16px;color:#333;font-weight:normal;">9</div>
<div class="a" style="left:34px;top:543px;width:1289px;height:1px;background:#dfdfdf;"></div>
<div class="a" style="left:0px;top:543px;width:33px;height:1px;background:#cfcfcf;"></div>
<div class="t" style="left:-183px;width:400px;text-align:center;top:526px;font-size:16px;color:#333;font-weight:normal;">10</div>
<div class="a" style="left:34px;top:575px;width:1289px;height:1px;background:#dfdfdf;"></div>
<div class="a" style="left:0px;top:575px;width:33px;height:1px;background:#cfcfcf;"></div>
<div class="t" style="left:-183px;width:400px;text-align:center;top:558px;font-size:16px;color:#333;font-weight:normal;">11</div>
<div class="a" style="left:34px;top:608px;width:1289px;height:1px;background:#dfdfdf;"></div>
<div class="a" style="left:0px;top:608px;width:33px;height:1px;background:#cfcfcf;"></div>
<div class="t" style="left:-183px;width:400px;text-align:center;top:591px;font-size:16px;color:#333;font-weight:normal;">12</div>
<div class="a" style="left:34px;top:640px;width:1289px;height:1px;background:#dfdfdf;"></div>
<div class="a" style="left:0px;top:640px;width:33px;height:1px;background:#cfcfcf;"></div>
<div class="t" style="left:-183px;width:400px;text-align:center;top:623px;font-size:16px;color:#333;font-weight:normal;">13</div>
<div class="a" style="left:34px;top:672px;width:1289px;height:1px;background:#dfdfdf;"></div>
<div class="a" style="left:0px;top:672px;width:33px;height:1px;background:#cfcfcf;"></div>
<div class="t" style="left:-183px;width:400px;text-align:center;top:655px;font-size:16px;color:#333;font-weight:normal;">14</div>
<div class="a" style="left:34px;top:705px;width:1289px;height:1px;background:#dfdfdf;"></div>
<div class="a" style="left:0px;top:705px;width:33px;height:1px;background:#cfcfcf;"></div>
<div class="t" style="left:-183px;width:400px;text-align:center;top:688px;font-size:16px;color:#333;font-weight:normal;">15</div>
<div class="a" style="left:1322px;top:241px;width:1px;height:468px;background:#ababab;"></div>
<div class="a" style="left:285px;top:285px;width:284px;height:1px;background:#4a4a4a;"></div>
<div class="a" style="left:285px;top:318px;width:284px;height:1px;background:#4a4a4a;"></div>
<div class="a" style="left:285px;top:350px;width:284px;height:1px;background:#4a4a4a;"></div>
<div class="a" style="left:285px;top:382px;width:284px;height:1px;background:#4a4a4a;"></div>
<div class="a" style="left:285px;top:414px;width:284px;height:1px;background:#4a4a4a;"></div>
<div class="a" style="left:285px;top:447px;width:284px;height:1px;background:#4a4a4a;"></div>
<div class="a" style="left:285px;top:479px;width:284px;height:1px;background:#4a4a4a;"></div>
<div class="a" style="left:285px;top:511px;width:284px;height:1px;background:#4a4a4a;"></div>
<div class="a" style="left:285px;top:543px;width:284px;height:1px;background:#4a4a4a;"></div>
<div class="a" style="left:285px;top:575px;width:284px;height:1px;background:#4a4a4a;"></div>
<div class="a" style="left:285px;top:608px;width:284px;height:1px;background:#4a4a4a;"></div>
<div class="a" style="left:285px;top:640px;width:284px;height:1px;background:#4a4a4a;"></div>
<div class="a" style="left:285px;top:672px;width:284px;height:1px;background:#4a4a4a;"></div>
<div class="a" style="left:285px;top:705px;width:284px;height:1px;background:#4a4a4a;"></div>
<div class="a" style="left:285px;top:285px;width:1px;height:421px;background:#4a4a4a;"></div>
<div class="a" style="left:430px;top:285px;width:1px;height:421px;background:#4a4a4a;"></div>
<div class="a" style="left:568px;top:285px;width:1px;height:421px;background:#4a4a4a;"></div>
<div class="t" style="left:310px;top:294px;font-size:19px;color:#000;font-weight:bold;letter-spacing:0.5px">数据或号码</div>
<div class="t" style="left:462px;top:294px;font-size:19px;color:#000;font-weight:bold;">分段显示</div>
<div class="t" style="left:28px;width:400px;text-align:right;top:329px;font-size:16px;color:#000;font-weight:normal;letter-spacing:1.1px;-webkit-text-stroke:0.55px #000">12345678910</div>
<div class="t" style="left:165px;width:400px;text-align:right;top:329px;font-size:16px;color:#333;font-weight:normal;word-spacing:1.6px">1234 5678 910</div>
<div class="t" style="left:28px;width:400px;text-align:right;top:361px;font-size:16px;color:#000;font-weight:normal;letter-spacing:1.1px;-webkit-text-stroke:0.55px #000">12345678911</div>
<div class="t" style="left:165px;width:400px;text-align:right;top:361px;font-size:16px;color:#333;font-weight:normal;word-spacing:1.6px">1234 5678 911</div>
<div class="t" style="left:28px;width:400px;text-align:right;top:393px;font-size:16px;color:#000;font-weight:normal;letter-spacing:1.1px;-webkit-text-stroke:0.55px #000">12345678912</div>
<div class="t" style="left:165px;width:400px;text-align:right;top:393px;font-size:16px;color:#333;font-weight:normal;word-spacing:1.6px">1234 5678 912</div>
<div class="t" style="left:28px;width:400px;text-align:right;top:426px;font-size:16px;color:#000;font-weight:normal;letter-spacing:1.1px;-webkit-text-stroke:0.55px #000">12345678913</div>
<div class="t" style="left:165px;width:400px;text-align:right;top:426px;font-size:16px;color:#333;font-weight:normal;word-spacing:1.6px">1234 5678 913</div>
<div class="t" style="left:28px;width:400px;text-align:right;top:458px;font-size:16px;color:#000;font-weight:normal;letter-spacing:1.1px;-webkit-text-stroke:0.55px #000">12345678914</div>
<div class="t" style="left:165px;width:400px;text-align:right;top:458px;font-size:16px;color:#333;font-weight:normal;word-spacing:1.6px">1234 5678 914</div>
<div class="t" style="left:28px;width:400px;text-align:right;top:522px;font-size:16px;color:#000;font-weight:normal;letter-spacing:1.1px;-webkit-text-stroke:0.55px #000">12345678915</div>
<div class="t" style="left:166px;width:400px;text-align:right;top:522px;font-size:16px;color:#333;font-weight:normal;">1234<span style="display:inline-block;width:5.5px;height:1.5px;background:#3a3a3a;margin:0 2.6px;vertical-align:4.5px"></span>5678<span style="display:inline-block;width:5.5px;height:1.5px;background:#3a3a3a;margin:0 2.6px;vertical-align:4.5px"></span>915</div>
<div class="t" style="left:28px;width:400px;text-align:right;top:554px;font-size:16px;color:#000;font-weight:normal;letter-spacing:1.1px;-webkit-text-stroke:0.55px #000">12345678916</div>
<div class="t" style="left:166px;width:400px;text-align:right;top:554px;font-size:16px;color:#333;font-weight:normal;">1234<span style="display:inline-block;width:5.5px;height:1.5px;background:#3a3a3a;margin:0 2.6px;vertical-align:4.5px"></span>5678<span style="display:inline-block;width:5.5px;height:1.5px;background:#3a3a3a;margin:0 2.6px;vertical-align:4.5px"></span>916</div>
<div class="t" style="left:28px;width:400px;text-align:right;top:587px;font-size:16px;color:#000;font-weight:normal;letter-spacing:1.1px;-webkit-text-stroke:0.55px #000">12345678917</div>
<div class="t" style="left:166px;width:400px;text-align:right;top:587px;font-size:16px;color:#333;font-weight:normal;">1234<span style="display:inline-block;width:5.5px;height:1.5px;background:#3a3a3a;margin:0 2.6px;vertical-align:4.5px"></span>5678<span style="display:inline-block;width:5.5px;height:1.5px;background:#3a3a3a;margin:0 2.6px;vertical-align:4.5px"></span>917</div>
<div class="t" style="left:28px;width:400px;text-align:right;top:619px;font-size:16px;color:#000;font-weight:normal;letter-spacing:1.1px;-webkit-text-stroke:0.55px #000">12345678918</div>
<div class="t" style="left:166px;width:400px;text-align:right;top:619px;font-size:16px;color:#333;font-weight:normal;">1234<span style="display:inline-block;width:5.5px;height:1.5px;background:#3a3a3a;margin:0 2.6px;vertical-align:4.5px"></span>5678<span style="display:inline-block;width:5.5px;height:1.5px;background:#3a3a3a;margin:0 2.6px;vertical-align:4.5px"></span>918</div>
<div class="t" style="left:28px;width:400px;text-align:right;top:651px;font-size:16px;color:#000;font-weight:normal;letter-spacing:1.1px;-webkit-text-stroke:0.55px #000">12345678919</div>
<div class="t" style="left:166px;width:400px;text-align:right;top:651px;font-size:16px;color:#333;font-weight:normal;">1234<span style="display:inline-block;width:5.5px;height:1.5px;background:#3a3a3a;margin:0 2.6px;vertical-align:4.5px"></span>5678<span style="display:inline-block;width:5.5px;height:1.5px;background:#3a3a3a;margin:0 2.6px;vertical-align:4.5px"></span>919</div>
<div class="t" style="left:28px;width:400px;text-align:right;top:684px;font-size:16px;color:#000;font-weight:normal;letter-spacing:1.1px;-webkit-text-stroke:0.55px #000">12345678920</div>
<div class="t" style="left:166px;width:400px;text-align:right;top:684px;font-size:16px;color:#333;font-weight:normal;">1234<span style="display:inline-block;width:5.5px;height:1.5px;background:#3a3a3a;margin:0 2.6px;vertical-align:4.5px"></span>5678<span style="display:inline-block;width:5.5px;height:1.5px;background:#3a3a3a;margin:0 2.6px;vertical-align:4.5px"></span>920</div>
<div class="a" style="left:1323px;top:216px;width:21px;height:493px;background:#e6e6e6;"></div>
<div class="a" style="left:1324px;top:238px;width:18px;height:463px;background:#d9d9d9;"></div>
<div class="a" style="left:1324px;top:220px;width:18px;height:17px;background:#fff;border:1px solid #ababab"></div>
<div class="a" style="left:1324px;top:237px;width:18px;height:364px;background:#fff;border:1px solid #ababab"></div>
<div class="a" style="left:1324px;top:692px;width:18px;height:17px;background:#fff;border:1px solid #ababab"></div>
<svg class="a" style="left:1329px;top:226px;" width="9" height="5" viewBox="0 0 9 5"><path d="M0 5h9L4.5 0z" fill="#666"/></svg>
<svg class="a" style="left:1329px;top:698px;" width="9" height="5" viewBox="0 0 9 5"><path d="M0 0h9L4.5 5z" fill="#666"/></svg>
<svg class="a" style="left:612px;top:414px;" width="16" height="22" viewBox="0 0 16 22"><path d="M2.5 2.5V17.5L6 14.5L8.8 20L11.3 18.8L8.8 14H14.5Z" fill="#fff" stroke="#222" stroke-width="1.1" stroke-linejoin="round"/></svg>
<div class="a" style="left:0px;top:709px;width:1323px;height:24px;background:#e6e6e6;"></div>
<div class="a" style="left:0px;top:709px;width:1323px;height:1px;background:#ababab;"></div>
<div class="a" style="left:0px;top:732px;width:1344px;height:1px;background:#d0d0d0;"></div>
<div class="a" style="left:1323px;top:709px;width:21px;height:24px;background:#e6e6e6;"></div>
<div class="a" style="left:0px;top:733px;width:1344px;height:22px;background:#f1f1f1;"></div>
<div class="a" style="left:0px;top:754px;width:1344px;height:2px;background:#1a1a1a;"></div>
<svg class="a" style="left:20px;top:714px;" width="6" height="12" viewBox="0 0 6 12"><path d="M5 1L1 6l4 5" fill="#ccc"/></svg>
<svg class="a" style="left:42px;top:714px;" width="6" height="12" viewBox="0 0 6 12"><path d="M1 1l4 5-4 5" fill="#ccc"/></svg>
<div class="a" style="left:80px;top:709px;width:66px;height:20px;background:#fff;border-left:1px solid #ababab;border-right:1px solid #ababab"></div>
<div class="a" style="left:80px;top:728px;width:66px;height:2px;background:#217346;"></div>
<div class="t" style="left:90px;top:711px;font-size:14.5px;color:#1e6e45;font-weight:normal;">Sheet1</div>
<svg class="a" style="left:172px;top:712px;" width="16" height="16" viewBox="0 0 16 16"><circle cx="8" cy="8" r="7" fill="none" stroke="#777" stroke-width="1.1"/><path d="M8 4v8M4 8h8" stroke="#777" stroke-width="1.4"/></svg>
<svg class="a" style="left:802px;top:715px;" width="4" height="12" viewBox="0 0 4 12"><circle cx="2" cy="2" r="1" fill="#999"/><circle cx="2" cy="6" r="1" fill="#999"/><circle cx="2" cy="10" r="1" fill="#999"/></svg>
<div class="a" style="left:817px;top:712px;width:17px;height:17px;background:#fff;border:1px solid #ababab"></div>
<svg class="a" style="left:822px;top:716px;" width="6" height="9" viewBox="0 0 6 9"><path d="M5 0v9L0 4.5z" fill="#555"/></svg>
<div class="a" style="left:834px;top:712px;width:436px;height:17px;background:#fff;border:1px solid #ababab"></div>
<div class="a" style="left:1270px;top:712px;width:37px;height:17px;background:#d9d9d9;"></div>
<div class="a" style="left:1306px;top:712px;width:17px;height:17px;background:#fff;border:1px solid #ababab"></div>
<svg class="a" style="left:1312px;top:716px;" width="6" height="9" viewBox="0 0 6 9"><path d="M0 0v9l5-4.5z" fill="#555"/></svg>
<div class="t" style="left:8px;top:737px;font-size:13px;color:#444;font-weight:normal;">就绪</div>
<svg class="a" style="left:54px;top:736px;" width="15" height="14" viewBox="0 0 15 14"><rect x="1" y="3.5" width="13" height="10" fill="#fff" stroke="#666" stroke-width="1"/><circle cx="3" cy="3" r="2.8" fill="#555"/><rect x="7" y="1.5" width="7" height="2" fill="#555"/><path d="M4.5 7v5M7.5 7v5M10.5 7v5" stroke="#aaa" stroke-width="1"/></svg>
<div class="a" style="left:1038px;top:733px;width:39px;height:21px;background:#c6c6c6;"></div>
<svg class="a" style="left:1050px;top:737px;" width="14" height="14" viewBox="0 0 14 14"><rect x="0.5" y="0.5" width="13" height="13" fill="none" stroke="#666" stroke-width="1"/><path d="M4.8 0.5v13M9.2 0.5v13M0.5 4.8h13M0.5 9.2h13" stroke="#666" stroke-width="1"/></svg>
<svg class="a" style="left:1090px;top:737px;" width="14" height="14" viewBox="0 0 14 14"><rect x="0.5" y="0.5" width="13" height="13" fill="none" stroke="#777" stroke-width="1"/><rect x="3.5" y="2.5" width="7" height="9" fill="none" stroke="#777" stroke-width="1"/><path d="M5 5h4M5 7h4M5 9h4" stroke="#777" stroke-width="0.8"/></svg>
<svg class="a" style="left:1130px;top:737px;" width="14" height="14" viewBox="0 0 14 14"><path d="M0.5 0.5h13v13h-13z" fill="none" stroke="#777" stroke-width="1"/><path d="M0.5 9.5h13M4.5 0.5v9M9.5 0.5v6h-5" fill="none" stroke="#777" stroke-width="1"/></svg>
<div class="a" style="left:1162px;top:742px;width:8px;height:2px;background:#555;"></div>
<div class="a" style="left:1174px;top:742px;width:103px;height:1px;background:#999;"></div>
<div class="a" style="left:1226px;top:737px;width:6px;height:12px;background:#666;"></div>
<svg class="a" style="left:1281px;top:738px;" width="10" height="10" viewBox="0 0 10 10"><path d="M5 0v10M0 5h10" stroke="#555" stroke-width="1.5"/></svg>
<div class="t" style="left:1302px;top:737px;font-size:13.5px;color:#444;font-weight:normal;">115%</div>
</body></html>
